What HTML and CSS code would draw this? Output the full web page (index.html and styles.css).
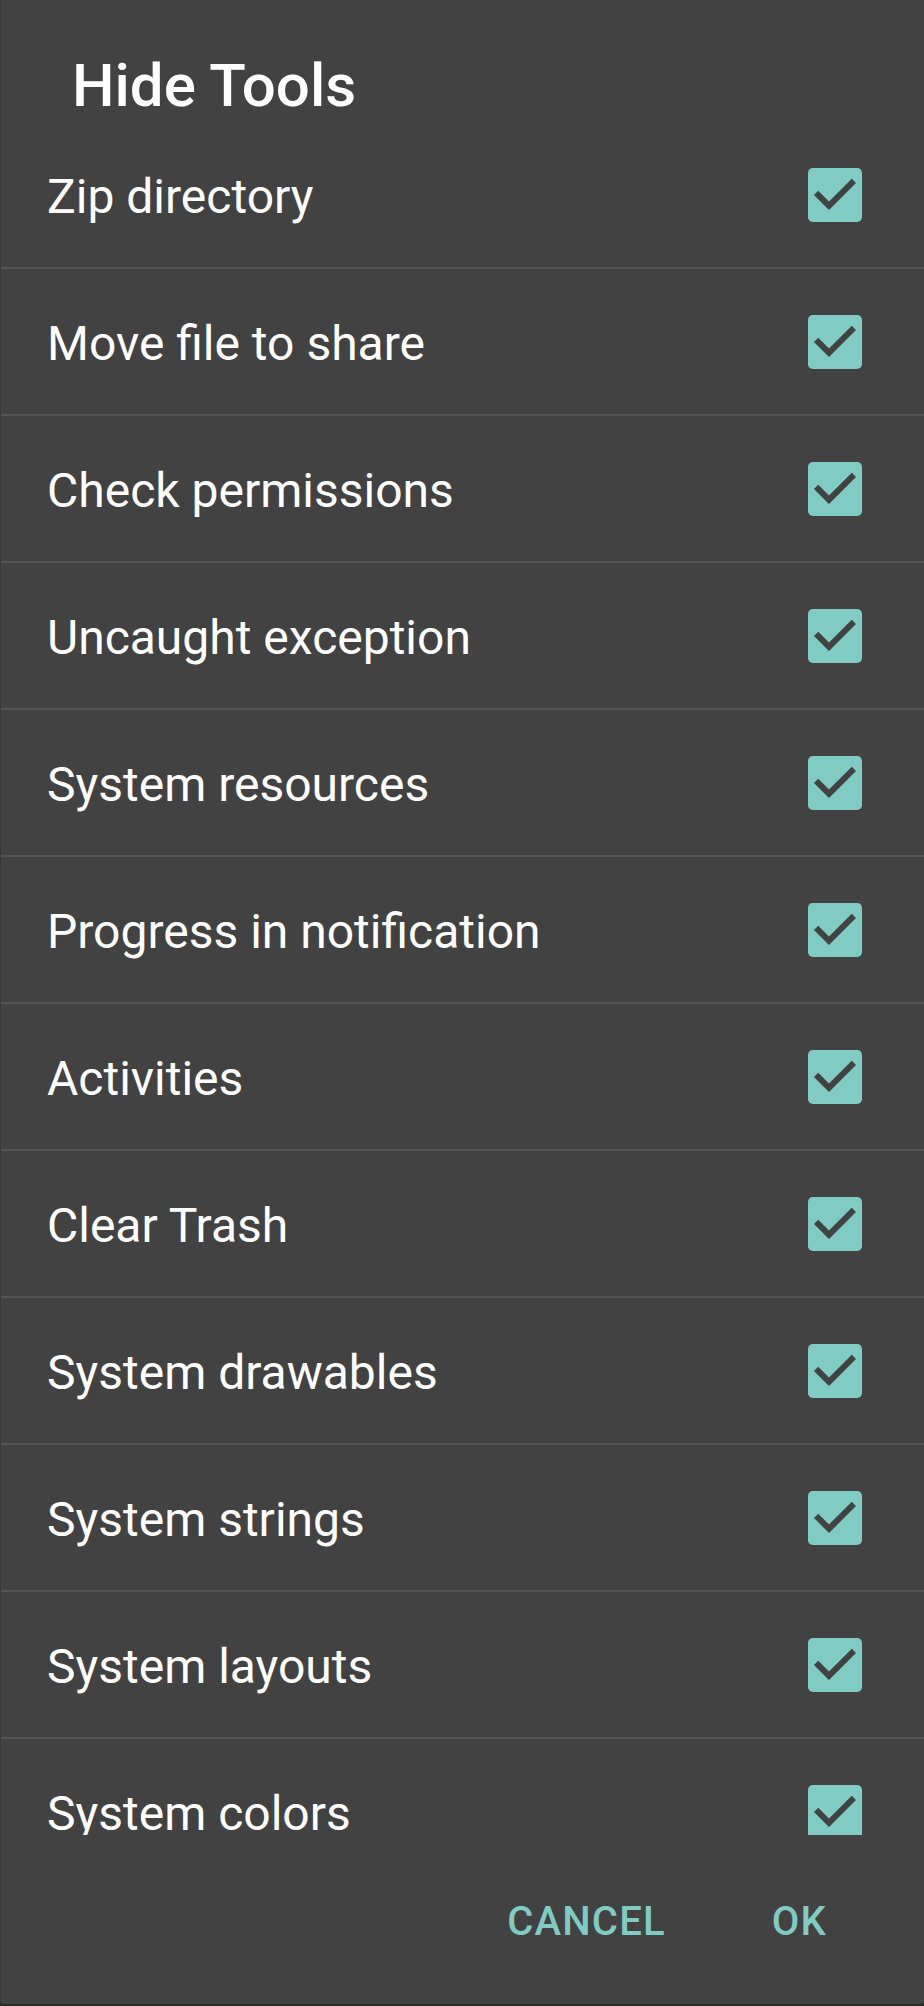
FILE: index.html
```html
<!DOCTYPE html>
<html lang="en">
<head>
<meta charset="utf-8">
<title>Hide Tools</title>
<link rel="stylesheet" href="styles.css">
</head>
<body>
<div class="dialog">
  <h1 class="title">Hide Tools</h1>
  <div class="list">
    <div class="row"><span class="label">Zip directory</span><svg class="cb" viewBox="3 3 18 18"><rect x="3" y="3" width="18" height="18" rx="1.6"/><path d="M10 17l-5-5 1.41-1.41L10 14.17l7.59-7.59L19 8l-9 9z"/></svg></div>
    <div class="row"><span class="label">Move file to share</span><svg class="cb" viewBox="3 3 18 18"><rect x="3" y="3" width="18" height="18" rx="1.6"/><path d="M10 17l-5-5 1.41-1.41L10 14.17l7.59-7.59L19 8l-9 9z"/></svg></div>
    <div class="row"><span class="label">Check permissions</span><svg class="cb" viewBox="3 3 18 18"><rect x="3" y="3" width="18" height="18" rx="1.6"/><path d="M10 17l-5-5 1.41-1.41L10 14.17l7.59-7.59L19 8l-9 9z"/></svg></div>
    <div class="row"><span class="label">Uncaught exception</span><svg class="cb" viewBox="3 3 18 18"><rect x="3" y="3" width="18" height="18" rx="1.6"/><path d="M10 17l-5-5 1.41-1.41L10 14.17l7.59-7.59L19 8l-9 9z"/></svg></div>
    <div class="row"><span class="label">System resources</span><svg class="cb" viewBox="3 3 18 18"><rect x="3" y="3" width="18" height="18" rx="1.6"/><path d="M10 17l-5-5 1.41-1.41L10 14.17l7.59-7.59L19 8l-9 9z"/></svg></div>
    <div class="row"><span class="label">Progress in notification</span><svg class="cb" viewBox="3 3 18 18"><rect x="3" y="3" width="18" height="18" rx="1.6"/><path d="M10 17l-5-5 1.41-1.41L10 14.17l7.59-7.59L19 8l-9 9z"/></svg></div>
    <div class="row"><span class="label">Activities</span><svg class="cb" viewBox="3 3 18 18"><rect x="3" y="3" width="18" height="18" rx="1.6"/><path d="M10 17l-5-5 1.41-1.41L10 14.17l7.59-7.59L19 8l-9 9z"/></svg></div>
    <div class="row"><span class="label">Clear Trash</span><svg class="cb" viewBox="3 3 18 18"><rect x="3" y="3" width="18" height="18" rx="1.6"/><path d="M10 17l-5-5 1.41-1.41L10 14.17l7.59-7.59L19 8l-9 9z"/></svg></div>
    <div class="row"><span class="label">System drawables</span><svg class="cb" viewBox="3 3 18 18"><rect x="3" y="3" width="18" height="18" rx="1.6"/><path d="M10 17l-5-5 1.41-1.41L10 14.17l7.59-7.59L19 8l-9 9z"/></svg></div>
    <div class="row"><span class="label">System strings</span><svg class="cb" viewBox="3 3 18 18"><rect x="3" y="3" width="18" height="18" rx="1.6"/><path d="M10 17l-5-5 1.41-1.41L10 14.17l7.59-7.59L19 8l-9 9z"/></svg></div>
    <div class="row"><span class="label">System layouts</span><svg class="cb" viewBox="3 3 18 18"><rect x="3" y="3" width="18" height="18" rx="1.6"/><path d="M10 17l-5-5 1.41-1.41L10 14.17l7.59-7.59L19 8l-9 9z"/></svg></div>
    <div class="row"><span class="label">System colors</span><svg class="cb" viewBox="3 3 18 18"><rect x="3" y="3" width="18" height="18" rx="1.6"/><path d="M10 17l-5-5 1.41-1.41L10 14.17l7.59-7.59L19 8l-9 9z"/></svg></div>
  </div>
  <div class="actions">
    <button class="btn">CANCEL</button>
    <button class="btn">OK</button>
  </div>
</div>
</body>
</html>
```

FILE: styles.css
```css
html, body {
  margin: 0;
  padding: 0;
}
body {
  width: 924px;
  height: 2006px;
  background: #2a2a2a;
  font-family: Roboto, "Noto Sans", "Liberation Sans", sans-serif;
  overflow: hidden;
}
.dialog {
  height: 2004px;
  background: #424242;
  border-left: 1px solid #393939;
  border-bottom-left-radius: 4px;
  border-bottom-right-radius: 4px;
  display: flex;
  flex-direction: column;
  box-sizing: border-box;
}
.title {
  margin: 0;
  padding: 56px 0 6px 71px;
  height: 122px;
  box-sizing: border-box;
  font-size: 60px;
  line-height: 60px;
  font-weight: 500;
  color: #ffffff;
}
.list {
  height: 1713px;
  overflow: hidden;
  flex: none;
}
.row {
  height: 145px;
  border-bottom: 2px solid #555555;
  display: flex;
  align-items: center;
  justify-content: space-between;
  padding: 0 62px 0 46px;
}
.label {
  font-size: 48px;
  line-height: 56px;
  color: #ffffff;
  padding-top: 4px;
}
.cb {
  width: 54px;
  height: 54px;
  flex: none;
}
.cb rect {
  fill: #80cbc4;
}
.cb path {
  fill: #424242;
}
.actions {
  flex: 1;
  display: flex;
  justify-content: flex-end;
  align-items: flex-start;
  padding: 67px 97px 0 0;
  gap: 106px;
}
.btn {
  background: none;
  border: none;
  padding: 0;
  margin: 0;
  font-family: Roboto, "Noto Sans", "Liberation Sans", sans-serif;
  font-size: 40px;
  line-height: 40px;
  font-weight: 500;
  letter-spacing: 1.2px;
  color: #80cbc4;
}
```
